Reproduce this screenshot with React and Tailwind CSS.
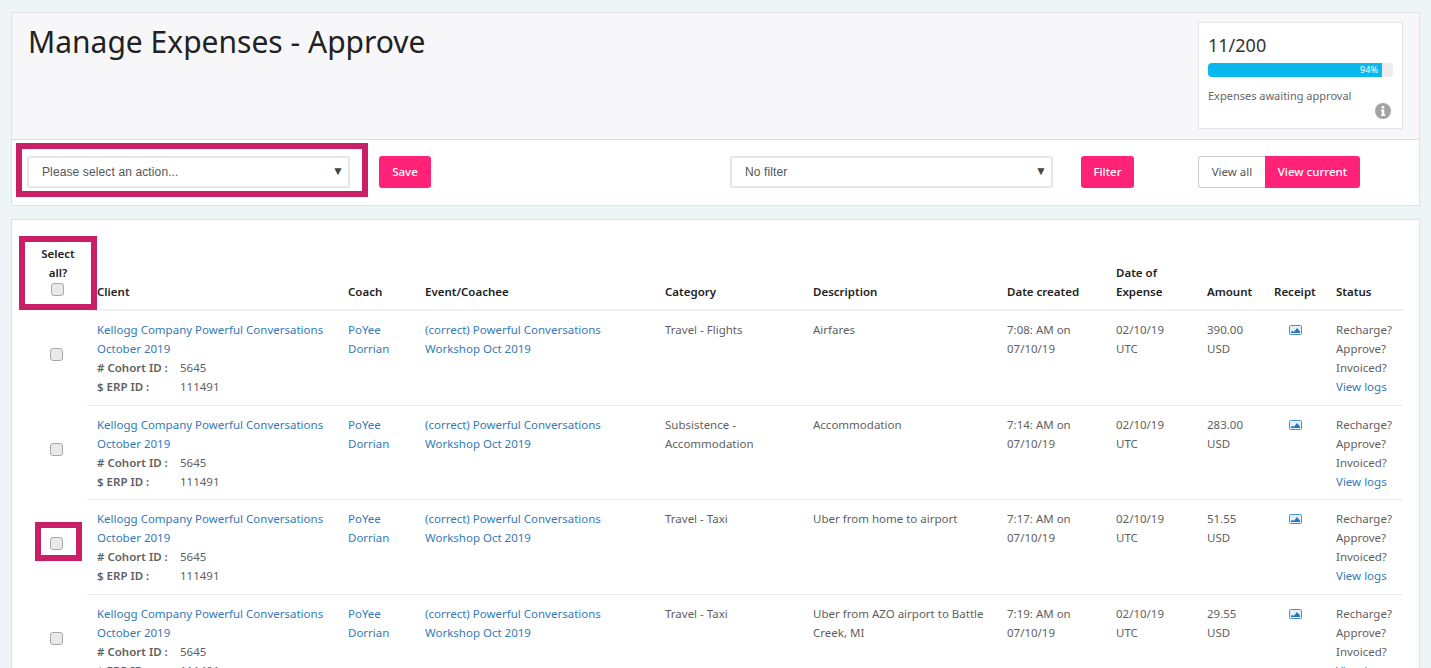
import { useState } from "react";

const rows = [
  {
    category: ["Travel - Flights"],
    description: ["Airfares"],
    created: "7:08: AM on",
    expense: "02/10/19",
    amount: "390.00",
  },
  {
    category: ["Subsistence -", "Accommodation"],
    description: ["Accommodation"],
    created: "7:14: AM on",
    expense: "02/10/19",
    amount: "283.00",
  },
  {
    category: ["Travel - Taxi"],
    description: ["Uber from home to airport"],
    created: "7:17: AM on",
    expense: "02/10/19",
    amount: "51.55",
    marked: true,
  },
  {
    category: ["Travel - Taxi"],
    description: ["Uber from AZO airport to Battle", "Creek, MI"],
    created: "7:19: AM on",
    expense: "02/10/19",
    amount: "29.55",
  },
];

const Check = () => (
  <input
    type="checkbox"
    className="block h-[13px] w-[13px] appearance-none rounded-[3px] border border-[#a9a9a9] bg-[#e9e9e9]"
  />
);

const PictureIcon = () => (
  <svg width="13" height="10" viewBox="0 0 13 10" className="mx-auto mt-[5px]">
    <rect x="0.5" y="0.5" width="12" height="9" rx="1" fill="#e3f0f9" stroke="#4a90c8" />
    <path d="M2 8V6.8L3.5 6L5 6.8L8 3L11 6.4V8Z" fill="#2a77b5" />
  </svg>
);

const InfoIcon = () => (
  <svg width="16" height="16" viewBox="0 0 16 16">
    <circle cx="8" cy="8" r="8" fill="#a3a3a3" />
    <rect x="6.7" y="3" width="2.6" height="2.4" fill="#fff" />
    <path d="M6 6.6H9.3V11.4H10.2V13H6V11.4H6.9V8.2H6Z" fill="#fff" />
  </svg>
);

const Select = ({ label }) => (
  <div className="relative h-[32px] w-[323px] rounded-[3px] border-2 border-[#e6e6e6] bg-white">
    <div className="pl-[13px] font-['Liberation_Sans',Arial,sans-serif] text-[12px] leading-[29px] tracking-[0.12px] text-[#555]">
      {label}
    </div>
    <span className="absolute right-[4px] top-[6px] text-[12px] leading-[14px] text-[#444]">▼</span>
  </div>
);

const Pink = ({ children, className }) => (
  <button className={`h-[32px] rounded-[3px] bg-[#ff2277] text-[11.5px] font-medium text-white ${className}`}>
    {children}
  </button>
);

const Head = ({ children, className = "" }) => (
  <th className={`border-b-2 border-[#f0f0f0] px-[10px] pb-[8px] text-left align-bottom font-semibold text-[#222] ${className}`}>
    {children}
  </th>
);

const Cell = ({ children }) => (
  <td className="border-b border-[#e9e9e9] px-[10px] pb-[8.5px] pt-[9px] align-top">{children}</td>
);

const A = ({ children }) => <div className="text-[#337ab7]">{children}</div>;

export default function App() {
  const [action] = useState("Please select an action...");

  return (
    <div className="h-[668px] overflow-hidden bg-[#edf5f7] px-[11px] pt-[12px] font-['Noto_Sans','Open_Sans',sans-serif] text-[11.5px] leading-[19px] text-[#5f5f5f]">
      <div className="border border-[#dfe3e4] bg-white">
        <div className="flex h-[127px] items-start justify-between border-b border-[#dcdcdc] bg-[#f7f7f9] pl-[16px] pr-[16px] pt-[9px]">
          <h1 className="text-[30px] font-normal leading-[40px] text-[#222]">Manage Expenses - Approve</h1>
          <div className="h-[107px] w-[205px] border border-[#e4e4e4] bg-white px-[9px] pt-[10px]">
            <div className="text-[18px] leading-[24px] text-[#333]">11/200</div>
            <div className="mt-[6px] h-[14px] w-[185px] overflow-hidden rounded-[4px] bg-[#ececec]">
              <div className="h-full w-[94%] bg-[#0bb7ef] pr-[4px] text-right text-[9px] leading-[14px] text-white">94%</div>
            </div>
            <div className="mt-[11px] text-[11px] leading-[16px] text-[#666]">Expenses awaiting approval</div>
            <div className="-mt-[1px] flex justify-end pr-[2px]">
              <InfoIcon />
            </div>
          </div>
        </div>
        <div className="flex h-[65px] items-center pb-[2px] pl-[15px]">
          <div className="relative">
            <Select label={action} />
            <div className="absolute -bottom-[9px] -left-[11px] -right-[18px] -top-[13px] border-[6px] border-[#c91f66]" />
          </div>
          <Pink className="ml-[29px] w-[52px]">Save</Pink>
          <div className="ml-[299px]">
            <Select label="No filter" />
          </div>
          <Pink className="ml-[28px] w-[53px]">Filter</Pink>
          <div className="ml-[64px] flex">
            <button className="h-[32px] w-[67px] rounded-l-[3px] border border-r-0 border-[#cfcfcf] bg-white text-[11.5px] text-[#555]">View all</button>
            <Pink className="w-[95px] rounded-l-none">View current</Pink>
          </div>
        </div>
      </div>

      <div className="mt-[13px] border border-[#dfe3e4] bg-white pl-[7px] pt-[25px]">
        <table className="w-[1384px] table-fixed border-collapse">
          <colgroup>
            <col className="w-[68px]" />
            <col className="w-[251px]" />
            <col className="w-[77px]" />
            <col className="w-[240px]" />
            <col className="w-[148px]" />
            <col className="w-[194px]" />
            <col className="w-[109px]" />
            <col className="w-[91px]" />
            <col className="w-[67px]" />
            <col className="w-[62px]" />
            <col className="w-[77px]" />
          </colgroup>
          <thead>
            <tr>
              <th className="align-bottom font-semibold text-[#222]">
                <div className="relative mb-[14px]">
                  <div className="-mt-[1px] mb-[1px] ml-[22px] w-[34px] text-center">Select all?</div>
                  <div className="ml-[32px]">
                    <Check />
                  </div>
                  <div className="absolute -bottom-[14px] left-[0px] right-[-10px] -top-[8px] border-[6px] border-[#c91f66]" />
                </div>
              </th>
              <Head>Client</Head>
              <Head>Coach</Head>
              <Head>Event/Coachee</Head>
              <Head>Category</Head>
              <Head>Description</Head>
              <Head>Date created</Head>
              <Head>Date of Expense</Head>
              <Head>Amount</Head>
              <Head>Receipt</Head>
              <Head>Status</Head>
            </tr>
          </thead>
          <tbody>
            {rows.map((row) => (
              <tr key={row.created}>
                <td className="align-middle">
                  <div className="relative mb-[6px] ml-[31px] h-[13px] w-[13px]">
                    <Check />
                    {row.marked && (
                      <div className="absolute -bottom-[11px] -left-[15px] -right-[19px] -top-[15px] border-[6px] border-[#c91f66]" />
                    )}
                  </div>
                </td>
                <Cell>
                  <A>Kellogg Company Powerful Conversations October 2019</A>
                  <div className="flex">
                    <b className="w-[83px] font-semibold">
                      # Cohort ID :
                    </b>
                    5645
                  </div>
                  <div className="flex">
                    <b className="w-[83px] font-semibold">
                      $ ERP ID :
                    </b>
                    111491
                  </div>
                </Cell>
                <Cell>
                  <A>PoYee Dorrian</A>
                </Cell>
                <Cell>
                  <A>(correct) Powerful Conversations Workshop Oct 2019</A>
                </Cell>
                <Cell>
                  {row.category.map((line) => (
                    <div key={line}>{line}</div>
                  ))}
                </Cell>
                <Cell>
                  {row.description.map((line) => (
                    <div key={line}>{line}</div>
                  ))}
                </Cell>
                <Cell>
                  <div>{row.created}</div>
                  <div>07/10/19</div>
                </Cell>
                <Cell>
                  <div>{row.expense}</div>
                  <div>UTC</div>
                </Cell>
                <Cell>
                  <div>{row.amount}</div>
                  <div>USD</div>
                </Cell>
                <Cell>
                  <PictureIcon />
                </Cell>
                <Cell>
                  <div>Recharge?</div>
                  <div>Approve?</div>
                  <div>Invoiced?</div>
                  <A>View logs</A>
                </Cell>
              </tr>
            ))}
          </tbody>
        </table>
      </div>
    </div>
  );
}
